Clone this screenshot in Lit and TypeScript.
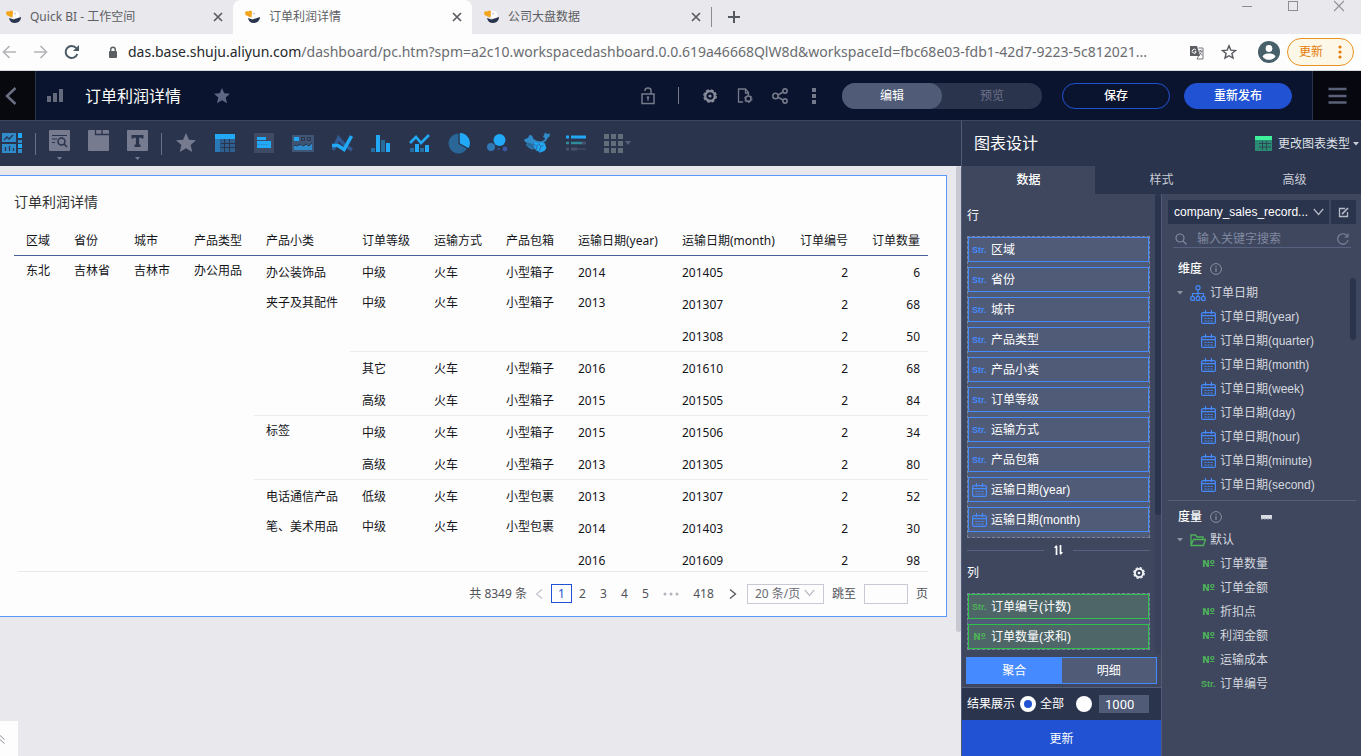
import { LitElement, html, svg, css, nothing } from "lit";
import type { TemplateResult } from "lit";
import { customElement, state } from "lit/decorators.js";
import { classMap } from "lit/directives/class-map.js";

const base = css`
  *, *::before, *::after { box-sizing: border-box; }
  :host {
    display: block;
    font-family: "Noto Sans", "Noto Sans CJK SC", sans-serif;
    font-size: 12px;
    line-height: 16px;
  }
  button, input, select {
    font: inherit;
    color: inherit;
    margin: 0;
    padding: 0;
    border: 0;
    border-radius: 0;
    background: none;
    outline: none;
  }
  button { cursor: pointer; display: flex; align-items: center; justify-content: center; }
  a { color: inherit; text-decoration: none; }
  svg { display: block; flex: none; }
  h1, h2, h3, ul { margin: 0; padding: 0; font-size: inherit; font-weight: inherit; list-style: none; }
`;

const icon = (w: number, h: number, body: unknown) => html`
  <svg width=${w} height=${h} viewBox="0 0 ${w} ${h}" fill="none" aria-hidden="true">${body}</svg>`;

/* ---------- browser icons ---------- */

const favicon = icon(16, 16, svg`
  <path d="M0 3.500 1.500 2l2 .5L5 1.500l2.500 1-.5 6-3.500-1L.5 6z" fill="#f2a51c"/>
  <path d="M7 2.500c3-1.500 6.500.5 6.500 3.500L12 9 6.500 9z" fill="#fff"/>
  <circle cx="9" cy="4.500" r="1" fill="#c9c9cf"/>
  <path d="M3 9 7.500 10.500 15 8c.2 3-2.500 6-6 6S3.500 12 3 9z" fill="#29344f"/>`);
const crossIcon = icon(10, 10, svg`<path d="M1 1l8 8M9 1L1 9" stroke="#5a5d63" stroke-width="1.7"/>`);
const plusIcon = icon(12, 12, svg`<path d="M6 0v12M0 6h12" stroke="#55585e" stroke-width="2"/>`);
const backArrow = icon(14, 14, svg`<path d="M14 7H1.500M7.500 1 1.500 7l6 6" stroke="#b4b5b8" stroke-width="1.7"/>`);
const forwardArrow = icon(14, 14, svg`<path d="M0 7h12.500M6.500 1l6 6-6 6" stroke="#b4b5b8" stroke-width="1.700"/>`);
const reloadIcon = icon(16, 16, svg`
  <path d="M13.300 10a6 6 0 1 1-1-5.800" stroke="#4a5a64" stroke-width="2"/>
  <path d="M15 1v6H9z" fill="#4a5a64"/>`);
const lockIcon = icon(10, 13, svg`
  <rect x="1" y="5" width="8" height="7" rx="1" fill="#5b5e63"/>
  <path d="M2.700 5V3.500a2.300 2.300 0 0 1 4.600 0V5" stroke="#5b5e63" stroke-width="1.400"/>`);
const translateIcon = icon(15, 15, svg`
  <path d="M1 1h7l3 10H1z" fill="#5b5e63"/>
  <path d="M9.500 3H14v11H8l1.500-3" stroke="#77797d"/>
  <path d="M7 5.200a2 2 0 1 0 .2 1.600H5.500" stroke="#fff"/>
  <path d="M9.500 6h4M11.500 5v1M10 10c1.500-.8 2.300-2 2.500-4M10.500 7.500l2.500 3" stroke="#77797d"/>`);
const starOutline = icon(16, 16, svg`
  <path d="M8 1.800l1.800 4.300 4.700.4-3.600 3 1.100 4.600L8 11.700l-4 2.400 1.100-4.600-3.600-3 4.700-.4z" stroke="#55585e" stroke-width="1.400"/>`);
const avatarIcon = icon(22, 22, svg`
  <circle cx="11" cy="11" r="11" fill="#48606a"/>
  <circle cx="11" cy="7.500" r="3.400" fill="#fff"/>
  <path d="M4.500 15.500c1-2.500 4-3 6.500-3s5.500.5 6.500 3a8 8 0 0 1-13 0z" fill="#fff"/>`);
const orangeDots = icon(4, 14, svg`<g fill="#e37c07"><circle cx="2" cy="2" r="1.600"/><circle cx="2" cy="7" r="1.600"/><circle cx="2" cy="12" r="1.600"/></g>`);
const minimizeIcon = icon(10, 12, svg`<path d="M0 6.500h10" stroke="#8d8d92"/>`);
const maximizeIcon = icon(10, 12, svg`<rect x=".5" y="1.500" width="9" height="9" stroke="#8d8d92"/>`);
const windowClose = icon(10, 12, svg`<path d="M0 1l10 10M10 1 0 11" stroke="#8d8d92" stroke-width="1.200"/>`);

/* ---------- top bar icons ---------- */

const starPath = "M8 0l2.300 5.300 5.700.5-4.300 3.800 1.300 5.600L8 12.200l-5 3 1.300-5.600L0 5.800l5.700-.5z";
const chevronBack = icon(12, 18, svg`<path d="M10.500 1 2 9l8.500 8" stroke="#6b7084" stroke-width="2.500"/>`);
const barsIcon = icon(16, 14, svg`<g fill="#646a7c"><rect y="7" width="4" height="6"/><rect x="6" y="4" width="4" height="9"/><rect x="12" width="4" height="13"/></g>`);
const starSolid = icon(16, 16, svg`<path d=${starPath} fill="#5d6784"/>`);
const unlockIcon = icon(14, 18, svg`
  <rect x="1" y="7" width="12" height="9.500" stroke="#75798a" stroke-width="1.500"/>
  <path d="M4 4V3.500a3 2.500 0 0 1 6 0V7" stroke="#75798a" stroke-width="1.500"/>
  <circle cx="7" cy="10.500" r="1.300" fill="#75798a"/><path d="M7 10v4" stroke="#75798a" stroke-width="1.200"/>`);
const gear = (size: number, color: string) => html`
  <svg width=${size} height=${size} viewBox="0 0 14 14" fill="none" aria-hidden="true">
    <circle cx="7" cy="7" r="4.800" stroke=${color} stroke-width="2.200"/>
    <circle cx="7" cy="7" r="6.200" stroke=${color} stroke-width="1.400" stroke-dasharray="2.900 1.970"/>
    <circle cx="7" cy="7" r="1.600" fill=${color}/>
  </svg>`;
const docGear = icon(16, 15, svg`
  <path d="M6 14H1.500V1h7l3 3.500V7M8.500 1v4h3" stroke="#75798a" stroke-width="1.300"/>
  <circle cx="11.300" cy="10.700" r="2.700" stroke="#75798a" stroke-width="1.600"/>
  <circle cx="11.300" cy="10.700" r="3.800" stroke="#75798a" stroke-width="1" stroke-dasharray="2 2"/>`);
const shareIcon = icon(16, 16, svg`
  <g stroke="#75798a" stroke-width="1.600"><circle cx="3.500" cy="8" r="2.700"/><circle cx="13" cy="3" r="2.100"/><circle cx="13" cy="13" r="2.100"/><path d="M6 7l5-3M6 9.200l5 2.800"/></g>`);
const dotsIcon = icon(5, 16, svg`<g fill="#75798a"><rect width="4" height="4"/><rect y="6" width="4" height="4"/><rect y="12" width="4" height="4"/></g>`);
const menuIcon = icon(19, 17, svg`<path d="M.5 2h18M.5 9h18M.5 15.500h18" stroke="#5a6179" stroke-width="2.500"/>`);

/* ---------- toolbar icons ---------- */

const dark = "#2a6b9e";
const mid = "#2f8bc9";
const lit = "#21a9f7";
const grey = "#777b8f";

const dashboardTool = icon(22, 22, svg`
  <rect x="1" y="1" width="14" height="9" fill="${mid}"/><rect x="1" y="12" width="14" height="9" fill="${mid}"/>
  <path d="M3 8l3-3 2 2 4-4" stroke="#2b344d" stroke-width="1.300"/>
  <path d="M4.500 19v-4M8.500 19v-5M12.500 19v-3" stroke="#2b344d" stroke-width="1.300"/>
  <rect x="17" y="1" width="4" height="5" fill="${lit}"/><rect x="17" y="8" width="4" height="3" fill="${mid}"/>
  <rect x="17" y="12" width="4" height="4" fill="${lit}"/><rect x="17" y="17" width="4" height="4" fill="${mid}"/>`);
const queryTool = icon(21, 21, svg`
  <rect width="21" height="21" rx="1" fill="${grey}"/>
  <path d="M3 5.500h15M3 9h5M3 12.500h3" stroke="#2b344d"/>
  <circle cx="12.500" cy="11.500" r="3.500" stroke="#2b344d" stroke-width="1.500"/><path d="M15 14l3 3" stroke="#2b344d" stroke-width="1.600"/>`);
const tabTool = icon(21, 21, svg`
  <rect width="21" height="21" rx="1" fill="${grey}"/>
  <path d="M7.500 0v4.500H21M14 0v4" stroke="#2b344d" stroke-width="1.300"/>`);
const textTool = icon(21, 21, svg`
  <rect width="21" height="21" rx="1" fill="${grey}"/>
  <path d="M4.500 8.500V5h12v3.500h-2.200V7.800h-2.200v6.700h1.400V17h-6v-2.500h1.400V7.800H6.700v.7z" fill="#2b344d"/>`);
const starTool = html`<svg width="20" height="20" viewBox="0 0 16 16" aria-hidden="true"><path d=${starPath} fill="#777b8f"/></svg>`;
const tableTool = icon(20, 18, svg`
  <rect width="20" height="18" fill="#2f5f8e"/><rect width="20" height="5" fill="${lit}"/><rect y="5" width="5" height="13" fill="#2a78b4"/>
  <path d="M5 9.500h15M5 13.500h15M9.500 5v13M14.500 5v13" stroke="#2b344d"/><path d="M5.500 5v13" stroke="#2b5584"/>`);
const rankTool = icon(20, 20, svg`
  <rect width="20" height="20" fill="#3f4a65"/><rect x="3" y="4" width="9" height="3" fill="${lit}"/>
  <rect x="3" y="8" width="14" height="7" fill="${lit}"/><path d="M3 11.500h11" stroke="#3190cf"/>`);
const kpiTool = icon(22, 17, svg`
  <rect width="22" height="17" fill="#3f5576"/><rect x="2" y="2" width="5" height="4" fill="${lit}"/>
  <path d="M9.500 2.500h3v3h-3zM15.500 2.500h3v3h-3z" stroke="#2b344d"/>
  <path d="M2 11l3-1 2 1 2-2 3 2 3-2 2 2 3-3v7H2z" fill="${mid}"/><path d="M2 10l3 1 3-2 3 2 3-2 3 2 3-3" stroke="#2b344d"/>`);
const lineTool = icon(22, 18, svg`
  <path d="M2 16 7.500 4l6 7 7.500 5" stroke="#305a92" stroke-width="3.500"/><path d="M1 11.500h6l6 4L20.500 2" stroke="${lit}" stroke-width="3.500"/>`);
const columnTool = icon(20, 17, svg`
  <rect y="13" width="4" height="4" fill="${dark}"/><rect x="5" width="4" height="17" fill="${lit}"/>
  <rect x="10" y="5" width="4" height="12" fill="${dark}"/><rect x="15" y="8" width="4" height="9" fill="${lit}"/>`);
const comboTool = icon(21, 19, svg`
  <path d="M1 9l6-6 5 6 8-8" stroke="${lit}" stroke-width="2.600"/>
  <rect x="1" y="14" width="4" height="4" fill="${dark}"/><rect x="6" y="10" width="4" height="8" fill="${lit}"/>
  <rect x="11" y="14" width="4" height="4" fill="${dark}"/><rect x="16" y="11" width="4" height="7" fill="${lit}"/>`);
const pieTool = icon(22, 22, svg`
  <circle cx="10.500" cy="11.500" r="10" fill="#2a6798"/><path d="M11.500 1a10 10 0 0 1 9 15L11.500 11.500z" fill="${lit}"/><path d="M11 0v11.500l9.500 5.500" stroke="#2b344d" stroke-width="1.300"/>`);
const bubbleTool = icon(21, 20, svg`
  <circle cx="12.500" cy="7" r="6" fill="${lit}"/><circle cx="4" cy="14" r="4" fill="#2f78b4"/>
  <circle cx="18" cy="16" r="2.400" fill="#3957a3"/><circle cx="11.500" cy="16" r="1" fill="#3957a3"/>`);
const mapTool = icon(26, 22, svg`
  <path d="M0 7.500 4 6l1.500-3L8 3.500l1.500 3.500 3.500 2 4 .500 3.500-1.500.5-2-2-1 1-2L21 .5l2 1.500 3-.5-.5 3-2 1.500L22 9l-2.500 1.500L22 12l-1 1 1.500 3-2 3-3.500 1-1 1.500-1-2-2.500-.5-1.500-2-3 .5-3.500-2L2 13l1-2.500L1 10z" fill="${mid}"/>
  <path d="M10 10.500l4 .5 4-.5 3 2 1 3.500-2 3-3 .8-3-.8-2-2.500-3-1z" fill="${lit}"/>
  <path d="M2 13l1.500-2.500L9 12l2 4.500-2.500.5-3-2z" fill="#2a6b9e"/>
  <path d="M9 11.500l3.500 2.500 2.500-2.500 1.500 3 3-1M13 14l-.5 3.500M16.500 14.500l-1 4.500" stroke="#2b5f93" stroke-width=".8"/>`);
const funnelTool = icon(20, 17, svg`
  <path d="M0 2h3M5 2h15" stroke="${lit}" stroke-width="3"/><path d="M0 8h3M5 8h11" stroke="#2f8a9b" stroke-width="2.500"/>
  <path d="M16 8h4M0 14h3M5 14h6" stroke="#46506b" stroke-width="3"/><path d="M11 14h9" stroke="#3a445f" stroke-width="2"/>`);
const moreTool = icon(27, 19, svg`
  <g fill="#626d7a">${[0, 7, 14].map((y) => [0, 7, 14].map((x) => svg`<rect x=${x} y=${y} width="5" height="5"/>`))}</g>
  <path d="M21 7h6l-3 4z" fill="#56617c"/>`);
const smallCaret = html`<svg class="below" width="5" height="3" viewBox="0 0 5 3"><path d="M0 0h5L2.500 3z" fill="#777b8f"/></svg>`;

/* ---------- panel icons ---------- */

const greenTable = icon(17, 15, svg`
  <rect width="17" height="15" fill="#2a8a73"/><rect width="17" height="4" fill="#3ef29b"/>
  <path d="M4 7.500h12M4 11h12M7.500 5v9M11.500 5v9" stroke="#2b4a55"/>`);
const caret = (color: string) => icon(6, 4, svg`<path d="M0 0h6L3 3.500z" fill="${color}"/>`);
const calendar = icon(15, 14, svg`
  <rect x=".6" y="2.600" width="13.800" height="10.800" rx="1.500" stroke="#458aff" stroke-width="1.200"/>
  <path d="M.6 5.600h13.800M4.500 0v4M10.500 0v4" stroke="#458aff" stroke-width="1.200"/>
  <path d="M3.500 8.500h2M6.500 8.500h2M9.500 8.500h2M3.500 11h2M6.500 11h2M9.500 11h2" stroke="#458aff" stroke-width="1.200"/>`);
const hierarchy = icon(16, 17, svg`
  <g stroke="#458aff" stroke-width="1.200"><circle cx="8" cy="2.800" r="2.100"/><path d="M8 5v6M2.500 11V8.500h11V11"/>
  <rect x=".8" y="11.600" width="3.600" height="3.800" rx="1"/><rect x="6.200" y="11.600" width="3.600" height="3.800" rx="1"/><rect x="11.600" y="11.600" width="3.600" height="3.800" rx="1"/></g>`);
const folder = icon(16, 13, svg`<path d="M1 11.500V1h4.500l1.500 2h6v2.500M1 11.500 3.500 5.500h12l-2 6z" stroke="#4db357" stroke-width="1.300"/>`);
const infoIcon = icon(12, 12, svg`<circle cx="6" cy="6" r="5.400" stroke="#8c92a2"/><path d="M6 5.300V9M6 3v1.200" stroke="#8c92a2" stroke-width="1.200"/>`);
const chevronDown = (color: string) => icon(11, 8, svg`<path d="M.8 1l4.700 5.500L10.200 1" stroke="${color}" stroke-width="1.200"/>`);
const editIcon = icon(11, 11, svg`<path d="M7 1.500H1.500v8h8V5" stroke="#b6bac6" stroke-width="1.300"/><path d="M4 7.200l6-6.200" stroke="#b6bac6" stroke-width="1.700"/>`);
const searchIcon = icon(12, 12, svg`<circle cx="5" cy="5" r="4" stroke="#8088a0" stroke-width="1.200"/><path d="M8 8l3.500 3.500" stroke="#8088a0" stroke-width="1.300"/>`);
const refreshIcon = icon(12, 12, svg`<path d="M10.500 3.500A5.200 5.200 0 1 0 11 7" stroke="#8088a0" stroke-width="1.100"/><path d="M11 .5v3.500H7.500" stroke="#8088a0"/>`);
const swapIcon = icon(9, 12, svg`<path d="M2.500 11V2M6.500 1v9" stroke="#fff" stroke-width="1.700"/><path d="M0 4l2.500-3.500V4zM9 8l-2.500 3.500V8z" fill="#fff"/>`);
const handleIcon = icon(12, 6, svg`<rect y="1" width="11" height="4" fill="#d9dbe2"/><path d="M0 5h11" stroke="#9aa0b0" stroke-dasharray="2 1"/>`);

@customElement("browser-bar")
export class BrowserBar extends LitElement {
  static styles = [base, css`
    .strip { display: flex; height: 34px; background: #e9e8ed; color: #5c5e63; }
    .tab { display: flex; align-items: center; flex: 0 1 239px; height: 34px; padding: 0 10px 0 12px; border-radius: 8px 8px 0 0; }
    .tab:first-child { flex-basis: 233px; padding-left: 6px; }
    .tab.active { background: #fdfdfd; }
    .tab span { flex: 1; padding-left: 8px; white-space: nowrap; }
    .new { padding: 0 16px; border-left: 1px solid #8b8b90; height: 20px; margin-top: 7px; }
    .window { display: flex; margin-left: auto; gap: 36px; padding-right: 17px; height: 12px; }
    .address { display: flex; align-items: center; height: 37px; background: #fdfdfd; border-bottom: 1px solid #d5d8dc; padding-left: 2px; padding-right: 7px; }
    .reload { margin: 0 0 0 16px; }
    .forward { margin-left: 18px; }
    .lock { margin: 0 10px 0 28px; }
    .url { flex: 1; min-width: 0; overflow: hidden; white-space: nowrap; font-size: 14px; line-height: 20px; color: #6a6c71; }
    .url b { font-weight: 400; color: #26282c; }
    .star { margin: 0 21px 0 17px; }
    .update { height: 28px; width: 67px; margin-left: 7px; border: 1px solid #e8931f; border-radius: 14px; background: #fdf7e8; color: #e37c07; gap: 15px; }
  `];

  render() {
    const tabs = ["Quick BI - 工作空间", "订单利润详情", "公司大盘数据"];
    return html`
      <div class="strip">
        ${tabs.map((t, i) => html`
          <div class=${classMap({ tab: true, active: i === 1 })}>
            ${favicon}<span>${t}</span><button aria-label="关闭标签页">${crossIcon}</button>
          </div>`)}
        <button class="new" aria-label="新标签页">${plusIcon}</button>
        <div class="window">
          <button aria-label="最小化">${minimizeIcon}</button>
          <button aria-label="最大化">${maximizeIcon}</button>
          <button aria-label="关闭">${windowClose}</button>
        </div>
      </div>
      <div class="address">
        <button aria-label="后退">${backArrow}</button>
        <button class="forward" aria-label="前进">${forwardArrow}</button>
        <button class="reload" aria-label="刷新">${reloadIcon}</button>
        <span class="lock">${lockIcon}</span>
        <div class="url"><b>das.base.shuju.aliyun.com</b>/dashboard/pc.htm?spm=a2c10.workspacedashboard.0.0.619a46668QlW8d&amp;workspaceId=fbc68e03-fdb1-42d7-9223-5c812021...</div>
        <button aria-label="翻译">${translateIcon}</button>
        <button class="star" aria-label="收藏">${starOutline}</button>
        <button aria-label="用户">${avatarIcon}</button>
        <button class="update">更新${orangeDots}</button>
      </div>`;
  }
}

@customElement("top-bar")
export class TopBar extends LitElement {
  static styles = [base, css`
    .bar { display: flex; align-items: center; height: 50px; background: #0a142e; border-bottom: 1px solid #3d465d; color: #fff; }
    .back { width: 36px; height: 49px; background: #08090f; border-right: 1px solid #2b344d; justify-content: flex-start; padding-left: 5px; }
    .bars { margin: 0 22px 0 11px; }
    h1 { font-size: 16px; line-height: 24px; }
    .fav { margin-left: 33px; }
    .tools { display: flex; align-items: center; margin-left: auto; }
    .tools button { width: 35px; height: 30px; }
    .tools i { width: 1px; height: 17px; background: #75798a; margin: 0 13px; }
    .segment { display: flex; margin-left: 10px; border-radius: 13px; background: #2b344d; }
    .segment button { width: 100px; height: 26px; border-radius: 13px; color: #6d7389; }
    .segment button.on { background: #4f5b77; color: #fff; }
    .pill { width: 108px; height: 26px; border-radius: 13px; border: 1px solid #2152d4; margin-left: 20px; font-weight: 500; }
    .pill.primary { background: #2152d4; margin: 0 20px 0 14px; }
    .menu { width: 49px; height: 49px; background: #07080f; border-left: 1px solid #2b344d; }
  `];

  @state() private mode = "编辑";

  render() {
    return html`
      <header class="bar">
        <button class="back" aria-label="返回">${chevronBack}</button>
        <span class="bars">${barsIcon}</span>
        <h1>订单利润详情</h1>
        <button class="fav" aria-label="收藏">${starSolid}</button>
        <div class="tools">
          <button aria-label="锁定">${unlockIcon}</button><i></i>
          <button aria-label="设置">${gear(14, "#8a8e9c")}</button>
          <button aria-label="页面设置">${docGear}</button>
          <button aria-label="分享">${shareIcon}</button>
          <button aria-label="更多">${dotsIcon}</button>
        </div>
        <div class="segment">
          ${["编辑", "预览"].map((m) => html`
            <button class=${classMap({ on: m === this.mode })} @click=${() => (this.mode = m)}>${m}</button>`)}
        </div>
        <button class="pill">保存</button>
        <button class="pill primary">重新发布</button>
        <button class="menu" aria-label="菜单">${menuIcon}</button>
      </header>`;
  }
}

@customElement("chart-toolbar")
export class ChartToolbar extends LitElement {
  static styles = [base, css`
    .bar { display: flex; align-items: center; height: 45px; background: #2b344d; overflow: hidden; }
    button { position: relative; width: 39px; height: 45px; padding-bottom: 1px; flex: none; }
    button.first { width: 23px; margin-right: 8px; }
    button.tool { padding-bottom: 6px; }
    button.wide { margin-left: 3px; }
    .below { position: absolute; left: 17px; bottom: 6px; }
    i { width: 1px; height: 22px; background: #6a7187; margin: 0 4px; flex: none; }
  `];

  render() {
    const components: [string, TemplateResult, boolean][] = [
      ["查询控件", queryTool, true], ["标签页", tabTool, false], ["文本", textTool, true],
    ];
    const charts: [string, TemplateResult][] = [
      ["收藏", starTool], ["交叉表", tableTool], ["排行榜", rankTool], ["指标看板", kpiTool], ["线图", lineTool],
      ["柱图", columnTool], ["组合图", comboTool], ["饼图", pieTool], ["气泡图", bubbleTool], ["地图", mapTool], ["漏斗图", funnelTool],
    ];
    return html`
      <nav class="bar">
        <button class="first" aria-label="仪表板">${dashboardTool}</button><i></i>
        ${components.map(([n, g, c]) => html`<button class="tool" aria-label=${n}>${g}${c ? smallCaret : nothing}</button>`)}<i></i>
        ${charts.map(([n, g]) => html`<button aria-label=${n}>${g}</button>`)}
        <button class="wide" aria-label="更多图表">${moreTool}</button>
      </nav>`;
  }
}

interface Cell { t: string; span?: number; line?: boolean; num?: boolean; }
const c = (t: string, span = 1, line = false): Cell => ({ t, span, line });
const n = (t: string, line = false): Cell => ({ t, line, num: true });

const columns: { name: string; cls: string }[] = [
  { name: "区域", cls: "w48" }, { name: "省份", cls: "w60" }, { name: "城市", cls: "w60" }, { name: "产品类型", cls: "w72" },
  { name: "产品小类", cls: "w96" }, { name: "订单等级", cls: "w72" }, { name: "运输方式", cls: "w72" }, { name: "产品包箱", cls: "w72" },
  { name: "运输日期(year)", cls: "w104" }, { name: "运输日期(month)", cls: "w118" }, { name: "订单编号", cls: "w72 num" }, { name: "订单数量", cls: "w72 num" },
];

const rows: Cell[][] = [
  [c("东北", 10), c("吉林省", 10), c("吉林市", 10), c("办公用品", 10), c("办公装饰品"), c("中级"), c("火车"), c("小型箱子"), c("2014"), c("201405"), n("2"), n("6")],
  [c("夹子及其配件", 4, true), c("中级", 2, true), c("火车", 2, true), c("小型箱子", 2, true), c("2013", 2, true), c("201307"), n("2"), n("68")],
  [c("201308", 1, true), n("2", true), n("50", true)],
  [c("其它"), c("火车"), c("小型箱子"), c("2016"), c("201610"), n("2"), n("68")],
  [c("高级", 1, true), c("火车", 1, true), c("小型箱子", 1, true), c("2015", 1, true), c("201505", 1, true), n("2", true), n("84", true)],
  [c("标签", 2, true), c("中级"), c("火车"), c("小型箱子"), c("2015"), c("201506"), n("2"), n("34")],
  [c("高级", 1, true), c("火车", 1, true), c("小型箱子", 1, true), c("2013", 1, true), c("201305", 1, true), n("2", true), n("80", true)],
  [c("电话通信产品"), c("低级"), c("火车"), c("小型包裹"), c("2013"), c("201307"), n("2"), n("52")],
  [c("笔、美术用品", 2), c("中级", 2), c("火车", 2), c("小型包裹", 2), c("2014"), c("201403"), n("2"), n("30")],
  [c("2016"), c("201609"), n("2"), n("98")],
];

@customElement("report-card")
export class ReportCard extends LitElement {
  static styles = [base, css`
    .card { background: #fdfdfd; border: 1px solid #5b97f5; border-left: 0; padding: 16px 18px 12px 14px; color: #14151a; }
    h2 { font-size: 14px; line-height: 20px; color: #333; }
    .scroller { margin-top: 14px; height: 345px; overflow: hidden; }
    table { width: 918px; border-collapse: separate; border-spacing: 0; table-layout: fixed; }
    th, td { padding: 0 12px; text-align: left; font-weight: 400; white-space: nowrap; }
    th { height: 30px; vertical-align: middle; border-bottom: 1px solid #4a6096; }
    td { height: 32px; vertical-align: top; padding-top: 9px; }
    td.span { padding-top: 7px; }
    td.line { border-bottom: 1px solid #ececee; }
    .num { text-align: right; }
    .w48 { width: 48px; } .w60 { width: 60px; } .w72 { width: 72px; } .w96 { width: 96px; } .w104 { width: 104px; } .w118 { width: 118px; }
    .pager { display: flex; align-items: center; justify-content: flex-end; margin-left: 4px; padding-top: 11px; border-top: 1px solid #e8e8ea; color: #505258; height: 33px; }
    .pager .arrow { width: 24px; height: 20px; }
    .pager .page { width: 21px; height: 19px; }
    .pager .page.on { border: 1px solid #2152d4; color: #2152d4; }
    .dots { width: 30px; }
    .dots svg { margin: 0 auto; }
    .last { width: 35px; }
    .size { position: relative; margin-left: 2px; }
    .size select { appearance: none; width: 77px; height: 20px; border: 1px solid #c9c9d6; padding-left: 7px; display: block; color: #6a6c72; }
    .size svg { position: absolute; right: 9px; top: 5px; pointer-events: none; }
    .jump { display: flex; align-items: center; gap: 8px; margin-left: 8px; }
    .jump input { width: 44px; height: 20px; border: 1px solid #c9c9d6; padding: 0 4px; }
  `];

  @state() private page = 1;

  render() {
    return html`
      <section class="card">
        <h2>订单利润详情</h2>
        <div class="scroller">
          <table>
            <thead><tr>${columns.map((h) => html`<th class=${h.cls} scope="col">${h.name}</th>`)}</tr></thead>
            <tbody>
              ${rows.map((r) => html`<tr>${r.map((d) => html`
                <td rowspan=${d.span ?? 1} class=${classMap({ span: (d.span ?? 1) > 1, line: !!d.line, num: !!d.num })}>${d.t}</td>`)}</tr>`)}
            </tbody>
          </table>
        </div>
        <div class="pager">
          <span>共 8349 条</span>
          <button class="arrow" aria-label="上一页">${icon(8, 10, svg`<path d="M7 .5 1.500 5 7 9.500" stroke="#c3c3ce" stroke-width="1.200"/>`)}</button>
          ${[1, 2, 3, 4, 5].map((p) => html`
            <button class=${classMap({ page: true, on: p === this.page })} @click=${() => (this.page = p)}>${p}</button>`)}
          <span class="dots">${icon(16, 4, svg`<g fill="#b4b4bc"><circle cx="2" cy="2" r="1.500"/><circle cx="8" cy="2" r="1.500"/><circle cx="14" cy="2" r="1.500"/></g>`)}</span>
          <button class="last">418</button>
          <button class="arrow" aria-label="下一页">${icon(8, 10, svg`<path d="M1 .5 6.500 5 1 9.500" stroke="#55575d" stroke-width="1.300"/>`)}</button>
          <span class="size">
            <select aria-label="每页条数"><option>20 条/页</option></select>
            ${chevronDown("#bdbdcb")}
          </span>
          <label class="jump">跳至<input type="text" />页</label>
        </div>
      </section>`;
  }
}

const fieldMark = (kind: string) =>
  kind === "date" ? calendar
    : kind === "num" ? html`<span class="mark no">Nº</span>`
    : html`<span class="mark">Str.</span>`;

@customElement("design-panel")
export class DesignPanel extends LitElement {
  static styles = [base, css`
    :host { display: flex; flex-direction: column; min-height: 0; background: #3e475e; border-left: 1px solid #4f5b77; color: #fff; font-family: "Liberation Sans", "Noto Sans CJK SC", sans-serif; }
    .head { display: flex; align-items: center; height: 45px; flex: none; background: #2b344d; padding: 0 2px 0 12px; }
    .head h2 { font-size: 16px; line-height: 24px; flex: 1; }
    .head button { gap: 6px; color: #dfe1e7; }
    .head button svg:last-child { margin-left: -3px; }
    .tabs { display: flex; height: 28px; flex: none; background: #2b344d; }
    .tabs button { flex: 1; color: #c8ccd6; }
    .tabs button.on { background: #3e475e; color: #fff; font-weight: 500; }
    .body { display: flex; flex: 1; min-height: 0; }
    .fields { width: 200px; display: flex; flex-direction: column; border-right: 1px solid #4f5b77; }
    .wells { flex: 1; min-height: 0; display: flex; overflow: hidden; }
    .drop { flex: 1; min-width: 0; padding: 14px 5px 0; }
    .track { width: 6px; flex: none; background: #3a425b; }
    .track i { display: block; height: 321px; background: #2b344d; border-radius: 3px; }
    .well { margin-top: 12px; border: 1px dashed #7d8497; background: #4f5b77; display: grid; gap: 5px; }
    .well.rows { padding-bottom: 5px; }
    .item { display: flex; align-items: center; gap: 4px; height: 25px; padding-left: 3px; border: 1px solid #458aff; color: #fff; }
    .mark { width: 15px; font-size: 9px; font-weight: 700; line-height: 12px; color: #458aff; }
    .mark.no { font-family: "DejaVu Sans", sans-serif; text-align: center; }
    .green .item { border-color: #2bc24a; background: #4f6669; }
    .green .mark, .measure .mark { color: #4db357; }
    .swap { display: flex; align-items: center; gap: 10px; margin-top: 6px; height: 12px; }
    .swap::before, .swap::after { content: ""; flex: 1; height: 1px; background: #566280; }
    .label { display: flex; justify-content: space-between; align-items: center; height: 16px; }
    .label.cols { margin: 9px 0 0; padding-right: 5px; }
    .switch { display: flex; margin: 3px 4px 3px; height: 27px; border: 1px solid #458aff; background: #4f5b77; flex: none; }
    .switch button { flex: 1; }
    .switch button.on { background: #458aff; }
    .result { display: flex; align-items: center; height: 33px; flex: none; border-top: 1px solid #55607c; background: #2b344d; padding-left: 5px; }
    .result label { display: flex; align-items: center; gap: 4px; margin-left: 5px; }
    .result label.limit { margin-left: 12px; gap: 7px; }
    input[type="radio"] { appearance: none; width: 16px; height: 16px; border-radius: 50%; background: #fdfdfd; }
    input[type="radio"]:checked { border: 4px solid #fdfdfd; background: #2152d4; }
    .limit input[type="text"] { width: 50px; height: 18px; background: #4f5b77; padding-left: 6px; font-size: 13px; font-family: Roboto, sans-serif; }
    .refresh { height: 36px; flex: none; background: #2152d4; padding-top: 2px; }
    .data { flex: 1; min-width: 0; display: flex; flex-direction: column; padding: 6px 5px 0 6px; }
    .source { display: flex; gap: 2px; height: 24px; }
    .source .pick { flex: 1; min-width: 0; background: #2b344d; justify-content: space-between; padding: 0 5px 0 6px; font-weight: 500; }
    .source .edit { width: 25px; background: #2b344d; }
    .search { display: flex; align-items: center; height: 24px; margin: 0 5px; padding: 6px 2px 0; border-bottom: 1px solid #566280; }
    .search input { flex: 1; min-width: 0; margin: 0 10px; }
    .search input::placeholder { color: #8088a0; opacity: 1; }
    .group { display: flex; align-items: center; gap: 8px; margin: 13px 0 1px 10px; height: 16px; flex: none; }
    .group.m { margin: 8px 0 3px 10px; }
    .group h3 { font-weight: 500; }
    .handle { margin-left: 31px; }
    .dims { display: flex; border-bottom: 1px solid #55607c; height: 223px; }
    .dims ul { flex: 1; min-width: 0; padding-top: 3px; }
    .rail { width: 6px; }
    .rail i { display: block; width: 6px; height: 62px; background: #2b344d; border-radius: 3px; }
    .tree { margin-left: 9px; color: #d5d8df; }
    .tree li { display: flex; align-items: center; height: 24px; gap: 4px; padding-left: 24px; }
    .tree li.root { padding-left: 0; }
    .tree li.root svg:first-child { margin-right: 3px; }
  `];

  @state() private tab = "数据";
  @state() private mode = "聚合";

  render() {
    const rowFields: [string, string][] = [
      ["str", "区域"], ["str", "省份"], ["str", "城市"], ["str", "产品类型"], ["str", "产品小类"], ["str", "订单等级"],
      ["str", "运输方式"], ["str", "产品包箱"], ["date", "运输日期(year)"], ["date", "运输日期(month)"],
    ];
    const colFields: [string, string][] = [["str", "订单编号(计数)"], ["num", "订单数量(求和)"]];
    const grains = ["year", "quarter", "month", "week", "day", "hour", "minute", "second"];
    const measures: [string, string][] = [
      ["num", "订单数量"], ["num", "订单金额"], ["num", "折扣点"], ["num", "利润金额"], ["num", "运输成本"], ["str", "订单编号"],
    ];
    const item = ([k, t]: [string, string]) => html`<div class="item">${fieldMark(k)}<span>${t}</span></div>`;
    return html`
      <div class="head">
        <h2>图表设计</h2>
        <button>${greenTable}更改图表类型${caret("#c8ccd6")}</button>
      </div>
      <div class="tabs">
        ${["数据", "样式", "高级"].map((t) => html`
          <button class=${classMap({ on: t === this.tab })} @click=${() => (this.tab = t)}>${t}</button>`)}
      </div>
      <div class="body">
        <div class="fields">
          <div class="wells">
            <div class="drop">
              <div class="label">行</div>
              <div class="well rows">${rowFields.map(item)}</div>
              <div class="swap">${swapIcon}</div>
              <div class="label cols">列<button aria-label="列设置">${gear(12, "#f4f5f8")}</button></div>
              <div class="well green">${colFields.map(item)}</div>
            </div>
            <div class="track"><i></i></div>
          </div>
          <div class="switch">
            ${["聚合", "明细"].map((m) => html`
              <button class=${classMap({ on: m === this.mode })} @click=${() => (this.mode = m)}>${m}</button>`)}
          </div>
          <div class="result">
            <span>结果展示</span>
            <label><input type="radio" name="result" checked />全部</label>
            <label class="limit"><input type="radio" name="result" aria-label="限制行数" /><input type="text" value="1000" aria-label="行数" /></label>
          </div>
          <button class="refresh">更新</button>
        </div>
        <div class="data">
          <div class="source">
            <button class="pick">company_sales_record...${chevronDown("#b6bac6")}</button>
            <button class="edit" aria-label="编辑数据集">${editIcon}</button>
          </div>
          <div class="search">
            ${searchIcon}<input type="text" placeholder="输入关键字搜索" aria-label="搜索" />
            <button aria-label="刷新">${refreshIcon}</button>
          </div>
          <div class="group"><h3>维度</h3>${infoIcon}</div>
          <div class="dims">
            <ul class="tree">
              <li class="root">${caret("#8c92a2")}${hierarchy}订单日期</li>
              ${grains.map((g) => html`<li>${calendar}<span>订单日期(${g})</span></li>`)}
            </ul>
            <div class="rail"><i></i></div>
          </div>
          <div class="group m"><h3>度量</h3>${infoIcon}<span class="handle">${handleIcon}</span></div>
          <ul class="tree measure">
            <li class="root">${caret("#8c92a2")}${folder}默认</li>
            ${measures.map(([k, t]) => html`<li>${fieldMark(k)}<span>${t}</span></li>`)}
          </ul>
        </div>
      </div>`;
  }
}

@customElement("app-root")
export class AppRoot extends LitElement {
  static styles = [base, css`
    :host { display: flex; flex-direction: column; height: 100vh; min-height: 720px; overflow: hidden; }
    .workspace { flex: 1; min-height: 0; display: flex; }
    .main { flex: 1; min-width: 0; display: flex; flex-direction: column; }
    design-panel { width: 400px; flex: none; }
    .canvas { position: relative; flex: 1; min-height: 0; display: flex; background: #e9e8ed; }
    .sheet { flex: 1; min-width: 0; padding: 9px 9px 0 0; }
    .scroll { width: 5px; }
    .scroll i { display: block; height: 466px; background: #c8c8d2; border-radius: 3px; }
    .expand { position: absolute; left: 0; bottom: 0; width: 18px; height: 35px; background: #fdfdfd; justify-content: flex-start; }
  `];

  render() {
    return html`
      <browser-bar></browser-bar>
      <top-bar></top-bar>
      <div class="workspace">
        <div class="main">
          <chart-toolbar></chart-toolbar>
          <div class="canvas">
            <div class="sheet"><report-card></report-card></div>
            <div class="scroll"><i></i></div>
            <button class="expand" aria-label="展开">${icon(5, 10, svg`<path d="M0 1.500 4.500 5.500M0 5.500 4.500 9.500" stroke="#8d8d96"/>`)}</button>
          </div>
        </div>
        <design-panel></design-panel>
      </div>`;
  }
}
